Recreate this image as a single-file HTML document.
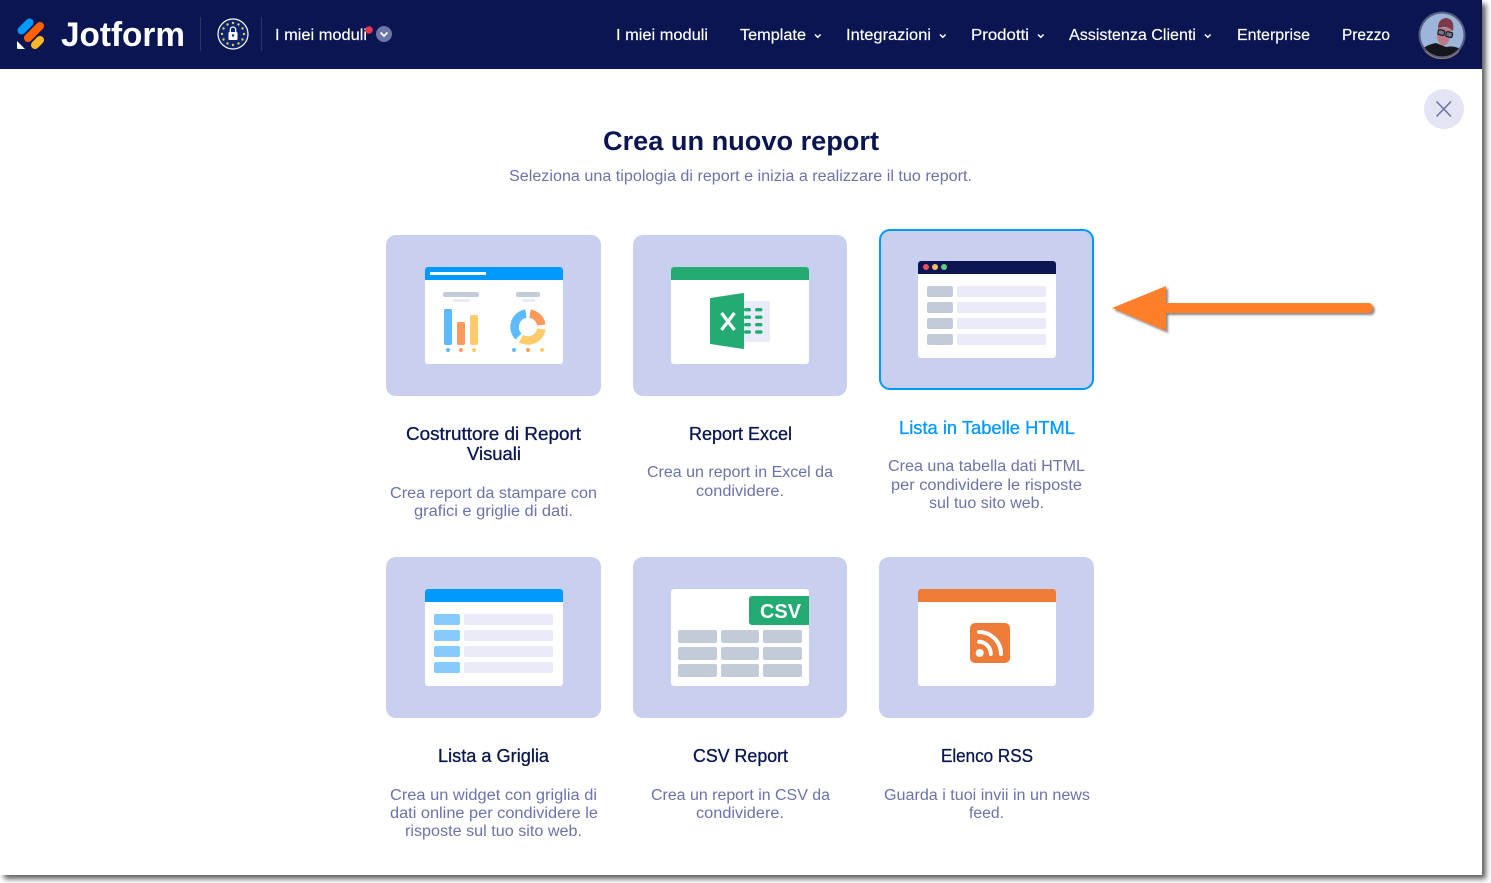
<!DOCTYPE html>
<html lang="it"><head><meta charset="utf-8"><title>Crea un nuovo report</title>
<style>
html,body{margin:0;padding:0;background:#fff;width:1491px;height:883px;overflow:hidden}
svg{display:block;position:absolute;left:0;top:0}
#page{position:absolute;left:0;top:0;width:1482px;height:875px;background:#fff;box-shadow:4px 4px 5px rgba(0,0,0,.62)}
text{font-family:"Liberation Sans",sans-serif}
.n{font-size:15.5px;fill:#fff;stroke:#fff;stroke-width:.15}
.t{font-size:18px;fill:#0A1551;stroke:#0A1551;stroke-width:.3}
.d{font-size:15.5px;fill:#6C73A8}
.c{fill:#C9CFEE}
.w{fill:#fff}
.g{fill:#C3CAD8}
.l{fill:#E9ECF8}
</style></head><body>
<div id="page"></div>
<svg width="1491" height="883" viewBox="0 0 1491 883" xmlns="http://www.w3.org/2000/svg">
<defs>
<clipPath id="av"><circle cx="1442" cy="35" r="21.5"/></clipPath>
<filter id="as" x="-5%" y="-30%" width="110%" height="170%"><feDropShadow dx="2" dy="2" stdDeviation="1" flood-color="#555" flood-opacity=".7"/></filter>
</defs>

<!-- nav -->
<rect width="1482" height="69" fill="#0A1551"/>
<!-- logo -->
<line x1="21.500" y1="30.500" x2="29.500" y2="22.500" stroke="#0099FF" stroke-width="8" stroke-linecap="round"/>
<line x1="28" y1="38" x2="40" y2="26" stroke="#FF6100" stroke-width="8" stroke-linecap="round"/>
<line x1="35" y1="45" x2="40" y2="40" stroke="#FFB629" stroke-width="8" stroke-linecap="round"/>
<path d="M17 41 L25 49 H18 Q17 49 17 48Z" fill="#fff"/>
<text x="61" y="46" font-size="34" font-weight="bold" fill="#fff" textLength="124" lengthAdjust="spacingAndGlyphs">Jotform</text>
<rect x="200" y="17" width="1" height="34" fill="#fff" opacity=".14"/>
<rect x="261" y="17" width="1" height="34" fill="#fff" opacity=".14"/>
<!-- EU badge -->
<circle cx="233" cy="34" r="15" fill="#0C2470" stroke="#fff" stroke-width="1.200"/>
<g fill="#F5C93B">
<circle cx="233" cy="23" r="1.200"/><circle cx="238.500" cy="24.500" r="1.200"/><circle cx="242.500" cy="28.500" r="1.200"/><circle cx="244" cy="34" r="1.200"/><circle cx="242.500" cy="39.500" r="1.200"/><circle cx="238.500" cy="43.500" r="1.200"/><circle cx="233" cy="45" r="1.200"/><circle cx="227.500" cy="43.500" r="1.200"/><circle cx="223.500" cy="39.500" r="1.200"/><circle cx="222" cy="34" r="1.200"/><circle cx="223.500" cy="28.500" r="1.200"/><circle cx="227.500" cy="24.500" r="1.200"/>
</g>
<rect x="228.500" y="32" width="9" height="8" rx="1" fill="#fff"/>
<path d="M230.300 32v-2.300a2.700 2.700 0 0 1 5.400 0V32" fill="none" stroke="#fff" stroke-width="1.300"/>
<circle cx="233" cy="35.500" r="1.200" fill="#0C2470"/>
<text class="n" x="275" y="40" textLength="92" lengthAdjust="spacingAndGlyphs">I miei moduli</text>
<circle cx="369" cy="30" r="3.800" fill="#E8364F"/>
<circle cx="384" cy="34" r="8" fill="#6F76A7"/>
<path d="M380.500 32.500 L384 36 L387.500 32.500" fill="none" stroke="#fff" stroke-width="1.700"/>

<text class="n" x="616" y="40" textLength="92" lengthAdjust="spacingAndGlyphs">I miei moduli</text>
<text class="n" x="740" y="40" textLength="66" lengthAdjust="spacingAndGlyphs">Template</text>
<text class="n" x="846" y="40" textLength="85" lengthAdjust="spacingAndGlyphs">Integrazioni</text>
<text class="n" x="971" y="40" textLength="58" lengthAdjust="spacingAndGlyphs">Prodotti</text>
<text class="n" x="1069" y="40" textLength="127" lengthAdjust="spacingAndGlyphs">Assistenza Clienti</text>
<text class="n" x="1237" y="40" textLength="73" lengthAdjust="spacingAndGlyphs">Enterprise</text>
<text class="n" x="1342" y="40" textLength="48" lengthAdjust="spacingAndGlyphs">Prezzo</text>
<g fill="none" stroke="#fff" stroke-width="1.500">
<path d="M815 34.500l2.800 2.800 2.800-2.800"/><path d="M940 34.500l2.800 2.800 2.800-2.800"/><path d="M1038 34.500l2.800 2.800 2.800-2.800"/><path d="M1205 34.500l2.800 2.800 2.800-2.800"/>
</g>
<!-- avatar -->
<circle cx="1442" cy="35" r="23.500" fill="#565C80"/>
<path d="M1425 51 A23 23 0 0 0 1459 51" fill="none" stroke="#9A8468" stroke-width="1"/>
<g clip-path="url(#av)">
<rect x="1420" y="13" width="44" height="44" fill="#9DB5D8"/>
<path d="M1421 50 Q1428 44 1436 43 L1446 47 Q1456 45 1463 51 V60 H1421Z" fill="#15151C"/>
<path d="M1438 27 L1452 29 L1449 41 Q1446 47 1441 45 Q1437 41 1437 36 Z" fill="#B87A84"/>
<path d="M1438 28 Q1438 19 1446 18 Q1455 19 1453 31 Q1447 25 1438 28Z" fill="#7A3A48"/>
<rect x="1438" y="30" width="6.500" height="5" rx="1.500" fill="#6E7A8C" stroke="#15151C" stroke-width="1.100" transform="rotate(14 1441 32.500)"/>
<rect x="1446" y="32" width="6.500" height="5" rx="1.500" fill="#6E7A8C" stroke="#15151C" stroke-width="1.100" transform="rotate(14 1449 34.500)"/>
</g>

<!-- close -->
<circle cx="1444" cy="109" r="20" fill="#E3E5F5"/>
<path d="M1436.500 101.500 L1451 116.500 M1451 101.500 L1436.500 116.500" stroke="#6C73A8" stroke-width="1.600" fill="none"/>

<!-- heading -->
<text x="603" y="150" font-size="27" font-weight="bold" fill="#0A1551" textLength="276" lengthAdjust="spacingAndGlyphs">Crea un nuovo report</text>
<text x="509" y="181" font-size="15.500" fill="#6C73A8" textLength="463" lengthAdjust="spacingAndGlyphs">Seleziona una tipologia di report e inizia a realizzare il tuo report.</text>

<!-- cards -->
<rect class="c" x="386" y="235" width="215" height="161" rx="10"/>
<rect class="c" x="633" y="235" width="214" height="161" rx="10"/>
<rect class="c" x="880" y="230" width="213" height="159" rx="10" stroke="#0099FF" stroke-width="2"/>
<rect class="c" x="386" y="557" width="215" height="161" rx="10"/>
<rect class="c" x="633" y="557" width="214" height="161" rx="10"/>
<rect class="c" x="879" y="557" width="215" height="161" rx="10"/>

<!-- card 1 -->
<rect class="w" x="425" y="267" width="138" height="97" rx="3"/>
<path d="M425 280V270a3 3 0 0 1 3-3h132a3 3 0 0 1 3 3v10Z" fill="#0099FF"/>
<rect class="w" x="430" y="272" width="56" height="3"/>
<rect class="g" x="443" y="292" width="36" height="5" rx="2"/>
<rect class="l" x="453" y="299" width="17" height="3"/>
<rect x="444" y="309" width="8" height="36" rx="1.500" fill="#5CBBFF"/>
<rect x="457" y="322" width="8" height="23" rx="1.500" fill="#FF9A5C"/>
<rect x="470" y="315" width="8" height="30" rx="1.500" fill="#FFCB6B"/>
<circle cx="448" cy="350" r="2" fill="#5CBBFF"/><circle cx="461" cy="350" r="2" fill="#FF9A5C"/><circle cx="474" cy="350" r="2" fill="#FFCB6B"/>
<rect class="g" x="516" y="292" width="24" height="5" rx="2"/>
<rect class="l" x="522" y="299" width="13" height="3"/>
<g fill="none" stroke-width="8.500">
<path d="M526 313.600A13.500 13.500 0 0 0 518.500 336.500" stroke="#5CBBFF"/>
<path d="M530 313.650A13.500 13.500 0 0 1 541.400 325" stroke="#FF9A5C"/>
<path d="M541.400 329A13.500 13.500 0 0 1 521 338.500" stroke="#FFCB6B"/>
</g>
<circle cx="514" cy="350" r="2" fill="#5CBBFF"/><circle cx="528" cy="350" r="2" fill="#FF9A5C"/><circle cx="542" cy="350" r="2" fill="#FFCB6B"/>

<!-- card 2 excel -->
<rect class="w" x="671" y="267" width="138" height="97" rx="3"/>
<path d="M671 280V270a3 3 0 0 1 3-3h132a3 3 0 0 1 3 3v10Z" fill="#24AB74"/>
<rect class="l" x="740" y="301" width="30" height="41" rx="1.500"/>
<path d="M710.500 298 L743 293 Q744 293 744 294 V348 Q744 349 743 349 L710.500 344 Q710 344 710 343 V299 Q710 298 710.500 298Z" fill="#24AB74"/>
<path d="M721.500 313 L734.500 330 M734.500 313 L721.500 330" stroke="#fff" stroke-width="3.200" fill="none"/>
<g fill="#24AB74">
<rect x="744" y="308" width="7" height="3.400" rx="1.700"/><rect x="755" y="308" width="7.500" height="3.400" rx="1.700"/>
<rect x="744" y="315.500" width="7" height="3.400" rx="1.700"/><rect x="755" y="315.500" width="7.500" height="3.400" rx="1.700"/>
<rect x="744" y="323" width="7" height="3.400" rx="1.700"/><rect x="755" y="323" width="7.500" height="3.400" rx="1.700"/>
<rect x="744" y="330.300" width="7" height="3.400" rx="1.700"/><rect x="755" y="330.300" width="7.500" height="3.400" rx="1.700"/>
</g>

<!-- card 3 table -->
<rect class="w" x="918" y="261" width="138" height="97" rx="3"/>
<path d="M918 274V264a3 3 0 0 1 3-3h132a3 3 0 0 1 3 3v10Z" fill="#0A1551"/>
<circle cx="926" cy="267" r="3" fill="#F0505A"/><circle cx="935" cy="267" r="3" fill="#F8BC5F"/><circle cx="944" cy="267" r="3" fill="#5FCB8A"/>
<rect class="g" x="927" y="286" width="26" height="11" rx="2"/><rect class="l" x="957" y="286" width="89" height="11" rx="2"/>
<rect class="g" x="927" y="302" width="26" height="11" rx="2"/><rect class="l" x="957" y="302" width="89" height="11" rx="2"/>
<rect class="g" x="927" y="318" width="26" height="11" rx="2"/><rect class="l" x="957" y="318" width="89" height="11" rx="2"/>
<rect class="g" x="927" y="334" width="26" height="11" rx="2"/><rect class="l" x="957" y="334" width="89" height="11" rx="2"/>

<!-- card 4 grid -->
<rect class="w" x="425" y="589" width="138" height="97" rx="3"/>
<path d="M425 602V592a3 3 0 0 1 3-3h132a3 3 0 0 1 3 3v10Z" fill="#0099FF"/>
<g fill="#85CBFF">
<rect x="434" y="614" width="26" height="11" rx="2"/><rect x="434" y="630" width="26" height="11" rx="2"/><rect x="434" y="646" width="26" height="11" rx="2"/><rect x="434" y="662" width="26" height="11" rx="2"/>
</g>
<rect class="l" x="464" y="614" width="89" height="11" rx="2"/><rect class="l" x="464" y="630" width="89" height="11" rx="2"/><rect class="l" x="464" y="646" width="89" height="11" rx="2"/><rect class="l" x="464" y="662" width="89" height="11" rx="2"/>

<!-- card 5 csv -->
<rect class="w" x="671" y="589" width="138" height="97" rx="3"/>
<path d="M809 596H752a3 3 0 0 0-3 3v23a3 3 0 0 0 3 3h57Z" fill="#24AB74"/>
<text x="760" y="618" font-size="20" font-weight="bold" fill="#fff" textLength="41" lengthAdjust="spacingAndGlyphs">CSV</text>
<g class="g">
<rect class="g" x="678" y="630" width="39" height="13" rx="2"/><rect class="g" x="721" y="630" width="38" height="13" rx="2"/><rect class="g" x="763" y="630" width="39" height="13" rx="2"/>
<rect class="g" x="678" y="647" width="39" height="13" rx="2"/><rect class="g" x="721" y="647" width="38" height="13" rx="2"/><rect class="g" x="763" y="647" width="39" height="13" rx="2"/>
<rect class="g" x="678" y="664" width="39" height="13" rx="2"/><rect class="g" x="721" y="664" width="38" height="13" rx="2"/><rect class="g" x="763" y="664" width="39" height="13" rx="2"/>
</g>

<!-- card 6 rss -->
<rect class="w" x="918" y="589" width="138" height="97" rx="3"/>
<path d="M918 602V592a3 3 0 0 1 3-3h132a3 3 0 0 1 3 3v10Z" fill="#EE7B38"/>
<rect x="970" y="623" width="40" height="40" rx="5" fill="#EE7B38"/>
<circle cx="979.700" cy="653" r="4" fill="#fff"/>
<path d="M979 641.800A12 12 0 0 1 990.800 654" fill="none" stroke="#fff" stroke-width="4" stroke-linecap="round"/>
<path d="M979 632A22 22 0 0 1 1001 654" fill="none" stroke="#fff" stroke-width="4" stroke-linecap="round"/>

<!-- titles -->
<text class="t" x="406" y="440" textLength="175" lengthAdjust="spacingAndGlyphs">Costruttore di Report</text>
<text class="t" x="467" y="460" textLength="54" lengthAdjust="spacingAndGlyphs">Visuali</text>
<text class="d" x="390" y="498" textLength="207" lengthAdjust="spacingAndGlyphs">Crea report da stampare con</text>
<text class="d" x="414" y="516" textLength="159" lengthAdjust="spacingAndGlyphs">grafici e griglie di dati.</text>

<text class="t" x="689" y="440" textLength="103" lengthAdjust="spacingAndGlyphs">Report Excel</text>
<text class="d" x="647" y="477" textLength="186" lengthAdjust="spacingAndGlyphs">Crea un report in Excel da</text>
<text class="d" x="696" y="496" textLength="88" lengthAdjust="spacingAndGlyphs">condividere.</text>

<text class="t" x="899" y="434" textLength="176" lengthAdjust="spacingAndGlyphs" style="fill:#0099FF;stroke:#0099FF">Lista in Tabelle HTML</text>
<text class="d" x="888" y="471" textLength="197" lengthAdjust="spacingAndGlyphs">Crea una tabella dati HTML</text>
<text class="d" x="891" y="490" textLength="191" lengthAdjust="spacingAndGlyphs">per condividere le risposte</text>
<text class="d" x="929" y="508" textLength="115" lengthAdjust="spacingAndGlyphs">sul tuo sito web.</text>

<text class="t" x="438" y="762" textLength="111" lengthAdjust="spacingAndGlyphs">Lista a Griglia</text>
<text class="d" x="390" y="800" textLength="207" lengthAdjust="spacingAndGlyphs">Crea un widget con griglia di</text>
<text class="d" x="390" y="818" textLength="208" lengthAdjust="spacingAndGlyphs">dati online per condividere le</text>
<text class="d" x="405" y="836" textLength="177" lengthAdjust="spacingAndGlyphs">risposte sul tuo sito web.</text>

<text class="t" x="693" y="762" textLength="95" lengthAdjust="spacingAndGlyphs">CSV Report</text>
<text class="d" x="651" y="800" textLength="179" lengthAdjust="spacingAndGlyphs">Crea un report in CSV da</text>
<text class="d" x="696" y="818" textLength="88" lengthAdjust="spacingAndGlyphs">condividere.</text>

<text class="t" x="941" y="762" textLength="92" lengthAdjust="spacingAndGlyphs">Elenco RSS</text>
<text class="d" x="884" y="800" textLength="206" lengthAdjust="spacingAndGlyphs">Guarda i tuoi invii in un news</text>
<text class="d" x="969" y="818" textLength="35" lengthAdjust="spacingAndGlyphs">feed.</text>

<!-- arrow -->
<path d="M1112 308 L1166 286 V303 H1369 Q1372 303 1373 308 Q1372 313 1369 313 H1166 V331 Z" fill="#FF7F2A" filter="url(#as)"/>
</svg>
</body></html>
